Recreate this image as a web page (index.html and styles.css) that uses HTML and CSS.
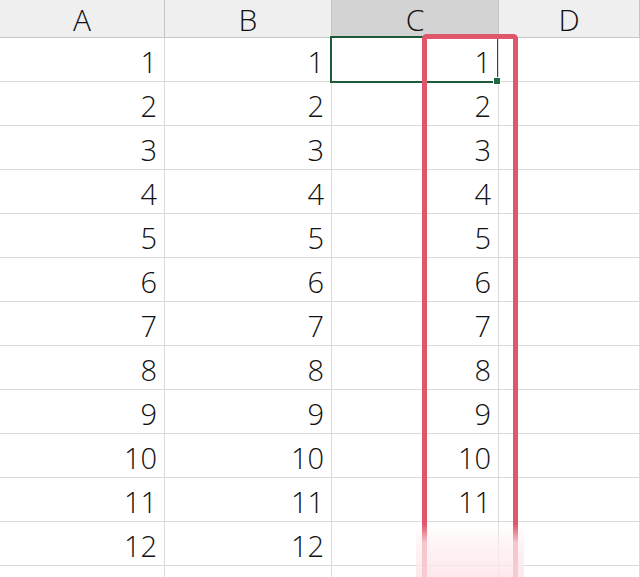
FILE: index.html
```html
<!DOCTYPE html>
<html>
<head>
<meta charset="utf-8">
<link rel="stylesheet" href="styles.css">
</head>
<body>
<div class="sheet">
  <div class="grid">
    <div class="hd">A</div><div class="hd">B</div><div class="hd hd-sel">C</div><div class="hd">D</div>
    <div class="c">1</div><div class="c">1</div><div class="c">1</div><div class="c"></div>
    <div class="c">2</div><div class="c">2</div><div class="c">2</div><div class="c"></div>
    <div class="c">3</div><div class="c">3</div><div class="c">3</div><div class="c"></div>
    <div class="c">4</div><div class="c">4</div><div class="c">4</div><div class="c"></div>
    <div class="c">5</div><div class="c">5</div><div class="c">5</div><div class="c"></div>
    <div class="c">6</div><div class="c">6</div><div class="c">6</div><div class="c"></div>
    <div class="c">7</div><div class="c">7</div><div class="c">7</div><div class="c"></div>
    <div class="c">8</div><div class="c">8</div><div class="c">8</div><div class="c"></div>
    <div class="c">9</div><div class="c">9</div><div class="c">9</div><div class="c"></div>
    <div class="c">10</div><div class="c">10</div><div class="c">10</div><div class="c"></div>
    <div class="c">11</div><div class="c">11</div><div class="c">11</div><div class="c"></div>
    <div class="c">12</div><div class="c">12</div><div class="c"></div><div class="c"></div>
    <div class="c"></div><div class="c"></div><div class="c"></div><div class="c"></div>
  </div>
  <div class="sel"></div>
  <div class="handle"></div>
  <div class="mark"></div>
  <div class="fade"></div>
</div>
</body>
</html>
```
FILE: styles.css
```css
html, body {
  margin: 0;
  padding: 0;
  background: #fff;
}
.sheet {
  position: relative;
  width: 640px;
  height: 577px;
  overflow: hidden;
  font-family: "Open Sans", "Noto Sans", "Liberation Sans", sans-serif;
  font-weight: 350;
  color: #111;
}
.grid {
  display: grid;
  grid-template-columns: 165px 167px 167px 141px;
  grid-template-rows: 38px repeat(13, 44px);
}
.hd {
  box-sizing: border-box;
  background: #efefef;
  border-right: 1px solid #c4c4c4;
  border-bottom: 1px solid #c8c8c8;
  font-size: 30px;
  line-height: 37px;
  text-align: center;
  padding-top: 1px;
}
.hd-sel {
  background: #d3d3d3;
}
.c {
  box-sizing: border-box;
  border-right: 1px solid #dadada;
  border-bottom: 1px solid #dadada;
  font-size: 29px;
  line-height: 39px;
  padding-top: 4px;
  padding-right: 7px;
  text-align: right;
}
.sel {
  position: absolute;
  left: 330px;
  top: 36px;
  width: 165px;
  height: 43px;
  border: 2px solid #1d5a37;
  border-right-width: 1px;
}
.handle {
  position: absolute;
  left: 494px;
  top: 78px;
  width: 6px;
  height: 6px;
  background: #1f6a40;
  outline: 1px solid #fff;
}
.mark {
  position: absolute;
  left: 422px;
  top: 34px;
  width: 86px;
  height: 560px;
  border: 5px solid #e0566b;
  border-bottom: none;
  border-radius: 5px 5px 0 0;
}
.fade {
  position: absolute;
  left: 416px;
  top: 524px;
  width: 108px;
  height: 53px;
  background: linear-gradient(to bottom, rgba(255,255,255,0), rgba(255,240,242,0.72) 35%, rgba(253,228,232,0.82));
}
```
